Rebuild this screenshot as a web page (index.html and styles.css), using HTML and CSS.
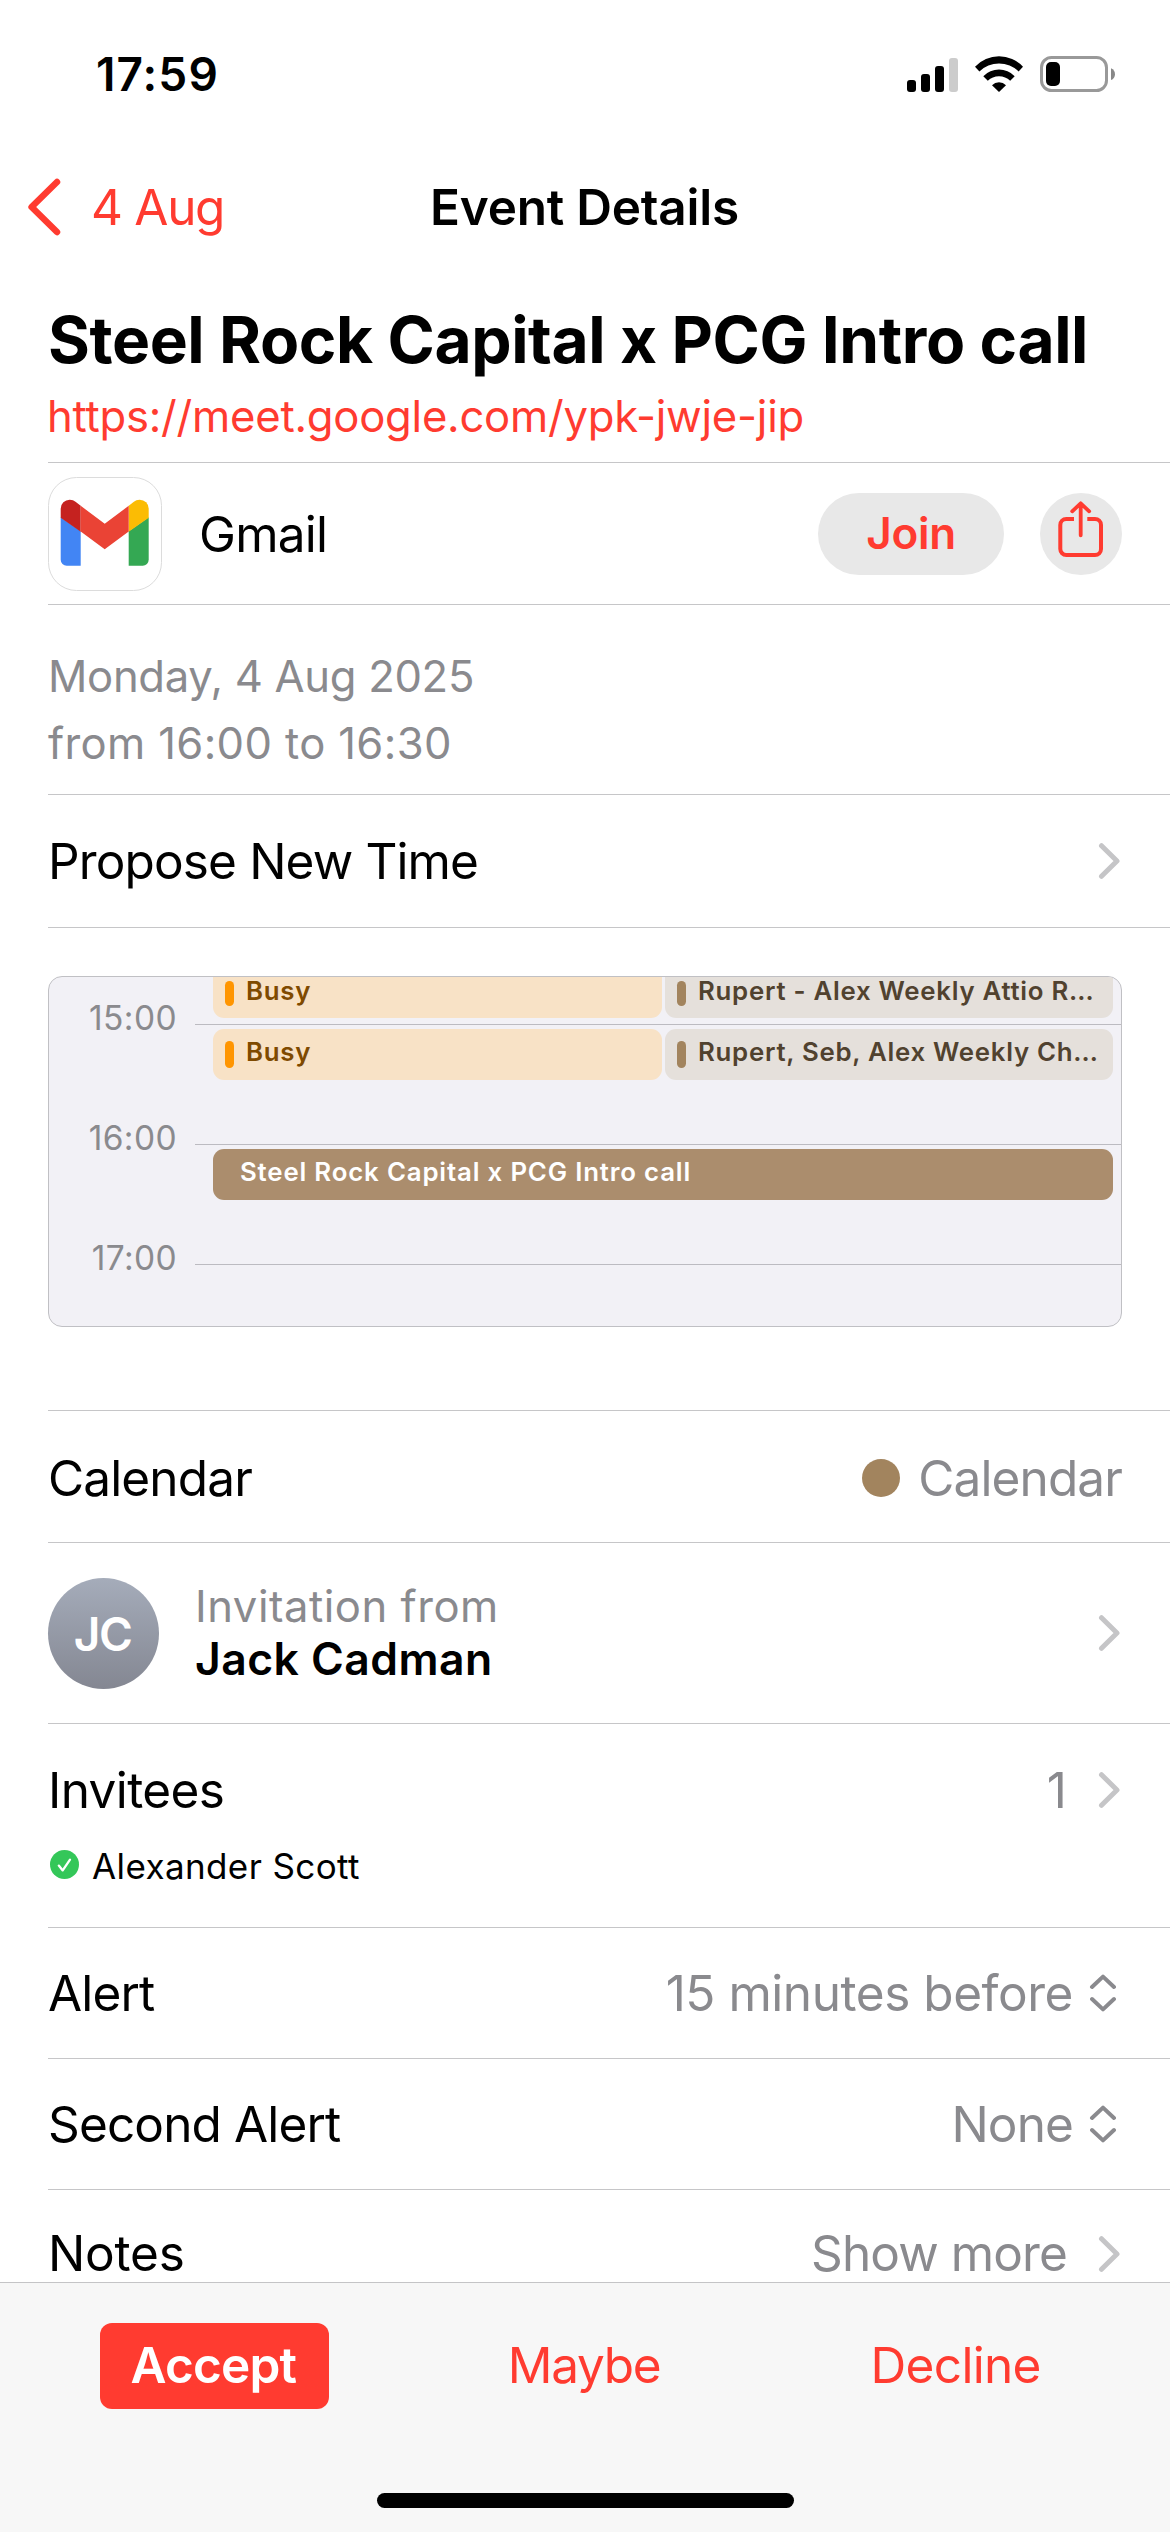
FILE: index.html
```html
<!DOCTYPE html>
<html lang="en">
<head>
<meta charset="utf-8">
<title>Event Details</title>
<link rel="stylesheet" href="styles.css">
</head>
<body>
<svg class="defs" aria-hidden="true">
  <symbol id="chevron" viewBox="0 0 25 36"><path d="M4.5 2.7 20 18 4.5 33.3" fill="none" stroke="#c5c5c7" stroke-width="5" stroke-linecap="round" stroke-linejoin="round"/></symbol>
  <symbol id="updown" viewBox="0 0 30 38"><path d="M4 13 15 2.6 26 13M4 25 15 35.4 26 25" fill="none" stroke="#8a8a8e" stroke-width="4" stroke-linecap="round" stroke-linejoin="round"/></symbol>
</svg>
<div class="screen">
  <div class="status">
    <span class="clock">17:59</span>
    <div class="status-icons">
      <svg width="51" height="36" viewBox="0 0 51 36">
        <rect x="0" y="24" width="9" height="12" rx="3"/>
        <rect x="14" y="18" width="9" height="18" rx="3"/>
        <rect x="28" y="10" width="9" height="26" rx="3"/>
        <rect x="42" y="2" width="9" height="34" rx="3" fill="#ccc"/>
      </svg>
      <svg width="48" height="36" viewBox="0 0 48 36">
        <path d="M0 10.7A33 33 0 0 1 48 10.7L43.6 15.4A28 28 0 0 0 4.4 15.4Z"/>
        <path d="M8.3 20.2A22 22 0 0 1 39.7 20.2L35.2 24.8A16 16 0 0 0 12.8 24.8Z"/>
        <path d="M17 29.2A9.6 9.6 0 0 1 31 29.2L24 36Z"/>
      </svg>
      <svg width="75" height="36" viewBox="0 0 75 36">
        <rect x="1.5" y="1.5" width="65" height="33" rx="10" fill="none" stroke="#999" stroke-width="3"/>
        <rect x="6" y="6" width="14" height="24" rx="5"/>
        <path d="M71 12.3C73.6 13.4 75 15.600 75 18.200S73.600 23 71 24.100Z" fill="#888"/>
      </svg>
    </div>
  </div>

  <div class="nav">
    <div class="back">
      <svg width="34" height="58" viewBox="0 0 34 58"><path d="M30 4 4.600 29 30 54" fill="none" stroke="#ff3b30" stroke-width="6.500" stroke-linecap="round" stroke-linejoin="round"/></svg>
      <span class="back-label">4 Aug</span>
    </div>
    <h1 class="nav-title">Event Details</h1>
  </div>

  <div class="content">
    <section class="heading">
      <h2 class="title">Steel Rock Capital x PCG Intro call</h2>
      <a class="link">https://meet.google.com/ypk-jwje-jip</a>
    </section>

    <section class="row app">
      <svg class="gmail" width="114" height="114" viewBox="0 0 114 114">
        <rect x=".5" y=".5" width="113" height="113" rx="28" fill="#fff" stroke="#dcdcdc"/>
        <path fill="#4285f4" d="M12.700 40.300 32.700 54.300V88.700H18.700a6 6 0 0 1-6-6Z"/>
        <path fill="#34a853" d="M100.700 40.300 80.700 54.300V88.700H94.700a6 6 0 0 0 6-6Z"/>
        <path fill="#c5221f" d="M12.700 40.800V31.700a9 9 0 0 1 9-9c2.500 0 4.200.8 5.800 2L32.700 28.800V54.800Z"/>
        <path fill="#fbbc04" d="M100.700 40.800V31.700a9 9 0 0 0-9-9c-2.500 0-4.200.8-5.800 2L80.700 28.800V54.800Z"/>
        <path fill="#ea4335" d="M32.700 28.800 56.700 46.700 80.700 28.800V54.500L56.700 72.300 32.700 54.500Z"/>
      </svg>
      <span class="app-name">Gmail</span>
      <span class="join">Join</span>
      <svg width="82" height="82" viewBox="0 0 82 82">
        <circle cx="41" cy="41" r="41" fill="#e8e8e8"/>
        <path d="M34 26H26.300a6 6 0 0 0-6 6V56a6 6 0 0 0 6 6H55a6 6 0 0 0 6-6V32a6 6 0 0 0-6-6H47.300" fill="none" stroke="#ff3b30" stroke-width="4"/>
        <path d="M40.700 11V42.300M32.200 18.300 40.700 10.300 49.200 18.300" fill="none" stroke="#ff3b30" stroke-width="3.800" stroke-linecap="round" stroke-linejoin="round"/>
      </svg>
    </section>

    <section class="row when">
      <p class="date">Monday, 4 Aug 2025</p>
      <p class="hours">from 16:00 to 16:30</p>
    </section>

    <section class="row propose">
      <span class="label wide">Propose New Time</span>
      <svg width="25" height="36"><use href="#chevron"/></svg>
    </section>

    <section class="row preview">
      <div class="timeline">
        <div class="hour"><span class="hour-label">15:00</span><i class="hour-line"></i></div>
        <div class="hour"><span class="hour-label">16:00</span><i class="hour-line"></i></div>
        <div class="hour"><span class="hour-label">17:00</span><i class="hour-line"></i></div>
        <div class="event early lane-a busy"><i class="bar"></i><span class="name">Busy</span></div>
        <div class="event early lane-b brown"><i class="bar"></i><span class="name">Rupert - Alex Weekly Attio R…</span></div>
        <div class="event at-15 lane-a busy"><i class="bar"></i><span class="name">Busy</span></div>
        <div class="event at-15 lane-b brown"><i class="bar"></i><span class="name">Rupert, Seb, Alex Weekly Ch…</span></div>
        <div class="event at-16 current"><span class="name">Steel Rock Capital x PCG Intro call</span></div>
      </div>
    </section>

    <section class="row calendar">
      <span class="label wide">Calendar</span>
      <i class="dot"></i>
      <span class="value">Calendar</span>
    </section>

    <section class="row invitation">
      <div class="avatar"><span class="initials">JC</span></div>
      <div class="from">
        <p class="from-label">Invitation from</p>
        <p class="from-name">Jack Cadman</p>
      </div>
      <svg width="25" height="36"><use href="#chevron"/></svg>
    </section>

    <section class="row invitees">
      <div class="invitees-head">
        <span class="label invitees-label">Invitees</span>
        <span class="value count">1</span>
        <svg width="25" height="36"><use href="#chevron"/></svg>
      </div>
      <div class="person">
        <svg width="29" height="29" viewBox="0 0 29 29"><circle cx="14.500" cy="14.500" r="14.500" fill="#34c759"/><path d="M8.800 15.600 12.700 20.400 20 9.600" fill="none" stroke="#fff" stroke-width="2.300" stroke-linecap="round" stroke-linejoin="round"/></svg>
        <span class="person-name">Alexander Scott</span>
      </div>
    </section>

    <section class="row alert">
      <span class="label wide">Alert</span>
      <span class="value minutes">15 minutes before</span>
      <svg class="picker" width="30" height="38"><use href="#updown"/></svg>
    </section>

    <section class="row alert">
      <span class="label wide">Second Alert</span>
      <span class="value">None</span>
      <svg class="picker" width="30" height="38"><use href="#updown"/></svg>
    </section>

    <section class="row notes">
      <span class="label notes-label">Notes</span>
      <span class="value more">Show more</span>
      <svg class="notes-arrow" width="25" height="36"><use href="#chevron"/></svg>
    </section>
  </div>

  <div class="toolbar">
    <div class="actions">
      <span class="action accept">Accept</span>
      <span class="action maybe">Maybe</span>
      <span class="action decline">Decline</span>
    </div>
    <div class="home"></div>
  </div>
</div>
</body>
</html>
```

FILE: styles.css
```css
* { box-sizing: border-box; margin: 0; padding: 0; }
body { background: #fff; font-family: Inter, "Liberation Sans", sans-serif; color: #000; white-space: nowrap; }
svg { display: block; flex: none; }
.defs { position: absolute; width: 0; height: 0; }
.screen { display: flex; flex-direction: column; width: 1170px; height: 2532px; overflow: hidden; }

.status { display: flex; align-items: center; justify-content: space-between; height: 147px; padding: 0 55px 0 96px; }
.clock { padding-top: 1px; font-size: 46px; font-weight: 600; letter-spacing: 1.1px; }
.status-icons { display: flex; gap: 17px; }

.nav { display: grid; grid-template-columns: 1fr auto 1fr; align-items: center; height: 120px; padding: 0 28px 0 27px; }
.back { display: flex; align-items: center; gap: 30px; color: #ff3b30; font-size: 49.5px; }
.back-label { letter-spacing: -1.3px; }
.nav-title { font-size: 49.5px; font-weight: 600; letter-spacing: -.22px; }

.content { flex: 1; min-height: 0; overflow: hidden; padding-left: 48px; }
.heading { height: 196px; padding-top: 34px; border-bottom: 1px solid #c6c6c8; }
.title { font-size: 64px; line-height: 78px; font-weight: 700; letter-spacing: -.4px; }
.link { display: block; margin: 8px 0 0 -1px; font-size: 43.6px; line-height: 60px; letter-spacing: -.23px; color: #ff3b30; }

.row { display: flex; align-items: center; padding-right: 48px; border-bottom: 1px solid #c6c6c8; }
.label { flex: 1; font-size: 49.5px; }
.wide { letter-spacing: -.86px; }
.value { font-size: 49.5px; letter-spacing: -.89px; color: #8a8a8e; }

.app { height: 142px; }
.app-name { flex: 1; margin-left: 37px; font-size: 49.5px; letter-spacing: -.78px; }
.join { width: 186px; height: 82px; margin-right: 36px; border-radius: 41px; background: #e8e8e8; color: #ff3b30; font-size: 44px; font-weight: 600; line-height: 81px; letter-spacing: -.27px; text-align: center; }

.when { display: block; height: 190px; padding-top: 39px; font-size: 43.6px; line-height: 66.5px; color: #8a8a8e; }
.date { letter-spacing: -.31px; }
.hours { letter-spacing: .36px; }
.propose { height: 133px; }

.preview { display: block; height: 483px; padding-top: 48px; }
.timeline { position: relative; height: 351px; padding-top: 21px; overflow: hidden; border: 1px solid #c0c0c4; border-radius: 14px; background: #f2f1f6; }
.hour { display: flex; gap: 18px; height: 120px; }
.hour-label { width: 128px; text-align: right; font-size: 33.5px; line-height: 40px; letter-spacing: .4px; color: #8a8a8e; }
.hour-line { flex: 1; margin-top: 26px; border-top: 1px solid #bcbbc1; }
.event { position: absolute; display: flex; height: 51px; padding: 12px; gap: 12px; border-radius: 11px; font-size: 25.8px; font-weight: 600; line-height: 22px; letter-spacing: .74px; }
.early { top: -10px; }
.at-15 { top: 52px; }
.at-16 { top: 172px; }
.lane-a { left: 164px; width: 449px; }
.lane-b { left: 616px; width: 448px; }
.bar { width: 9px; border-radius: 4.5px; }
.early .bar { margin-top: 2px; }
.early .name { padding-top: 1px; }
.busy { background: #f8e2c6; color: #7f4a00; }
.busy .bar { background: #ff9500; }
.brown { background: #e5e0db; color: #51422f; }
.brown .bar { background: #a2845e; }
.current { left: 164px; width: 900px; padding-left: 27px; background: #ab8d6d; color: #fff; letter-spacing: .83px; }

.calendar { height: 132px; padding-top: 3px; }
.dot { width: 38px; height: 38px; margin-right: 18px; border-radius: 50%; background: #a2845e; }

.invitation { height: 181px; }
.avatar { display: flex; align-items: center; justify-content: center; width: 111px; height: 111px; border-radius: 50%; background: linear-gradient(#a5acba, #848792); }
.initials { padding: 2px 2px 0 0; font-size: 46px; font-weight: 600; letter-spacing: -1.5px; color: #fff; }
.from { flex: 1; margin-left: 36px; line-height: 53.500px; }
.from-label { font-size: 43.6px; letter-spacing: .52px; color: #8a8a8e; }
.from-name { font-size: 44.5px; font-weight: 600; letter-spacing: .45px; }

.invitees { display: block; height: 204px; }
.invitees-head { display: flex; align-items: center; height: 131px; }
.invitees-label { letter-spacing: -.6px; }
.count { margin-right: 31px; }
.person { display: flex; align-items: flex-start; gap: 13px; margin: -9px 0 0 2px; padding-top: 4px; }
.person-name { font-size: 35px; line-height: 32px; letter-spacing: .39px; }

.alert { height: 131px; }
.minutes { letter-spacing: -.45px; }
.picker { margin: 0 4px 0 15px; }
.notes { align-items: flex-start; height: 92px; padding-top: 35px; border-bottom: 0; line-height: 56px; }
.notes-label { letter-spacing: -.2px; }
.notes-arrow { margin-top: 11px; }
.more { margin-right: 30px; }

.toolbar { display: flex; flex-direction: column; align-items: center; justify-content: space-between; height: 250px; padding: 40px 29px 24px; border-top: 1px solid #c4c4c6; background: #f7f7f7; }
.actions { display: grid; grid-template-columns: repeat(3, 1fr); justify-items: center; width: 100%; }
.action { height: 86px; font-size: 49.5px; line-height: 84px; color: #ff3b30; text-align: center; }
.accept { width: 229px; padding-right: 2px; border-radius: 12px; background: #ff3b30; color: #fff; font-weight: 600; letter-spacing: -.82px; }
.maybe { padding-right: 2px; letter-spacing: -1.3px; }
.decline { letter-spacing: -.68px; }
.home { width: 417px; height: 15px; border-radius: 7.5px; background: #000; }
```
